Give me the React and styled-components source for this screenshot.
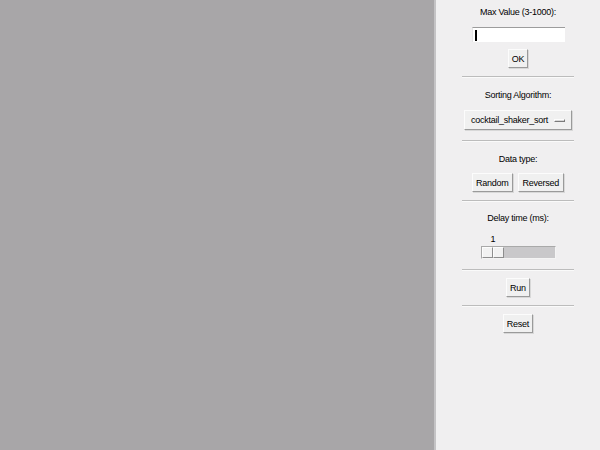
import React from 'react'
import styled, { createGlobalStyle } from 'styled-components'

const GlobalStyle = createGlobalStyle`
  html, body {
    margin: 0;
    padding: 0;
    width: 600px;
    height: 450px;
    overflow: hidden;
    background: #f0eff0;
  }
  * { box-sizing: border-box; }
`

const Window = styled.div`
  display: flex;
  width: 600px;
  height: 450px;
  font-family: "Liberation Sans", Arial, sans-serif;
  font-size: 9px;
  letter-spacing: -0.25px;
  color: #000;
`

const Canvas = styled.div`
  width: 436px;
  height: 100%;
  background: #a8a6a8;
  border-right: 2px solid #c4c3c5;
`

const Panel = styled.div`
  flex: 1;
  display: flex;
  flex-direction: column;
  align-items: center;
  background: #f0eff0;
  padding-top: 5px;
`

const Label = styled.div`
  height: 14px;
  line-height: 14px;
  margin-top: ${p => p.$mt || 0}px;
  white-space: nowrap;
`

const Entry = styled.div`
  width: 93px;
  height: 15px;
  margin-top: ${p => p.$mt || 0}px;
  background: #fff;
  border-top: 1px solid #9c9c9c;
  border-left: 1px solid #e4e4e4;
  display: flex;
  align-items: center;
  padding-left: 2px;
`

const Caret = styled.span`
  width: 2px;
  height: 11px;
  background: #000;
`

const Button = styled.div`
  height: 19px;
  padding: 0 ${p => p.$px || 4}px;
  margin-top: ${p => p.$mt || 0}px;
  display: flex;
  align-items: center;
  justify-content: center;
  background: #f0f0f0;
  border: 1px solid;
  border-color: #fcfcfc #9a9a9a #9a9a9a #fcfcfc;
  box-shadow: 1px 1px 0 #d8d8d8;
`

const ButtonRow = styled.div`
  display: flex;
  gap: 5px;
  margin-top: ${p => p.$mt || 0}px;
`

const Separator = styled.div`
  width: 112px;
  height: 2px;
  margin-top: ${p => p.$mt || 0}px;
  border-top: 1px solid #bcbcbc;
  border-bottom: 1px solid #fafafa;
`

const OptionMenu = styled.div`
  width: 108px;
  height: 20px;
  margin-top: ${p => p.$mt || 0}px;
  display: flex;
  align-items: center;
  justify-content: space-between;
  padding: 0 6px 0 6px;
  background: #f0f0f0;
  border: 1px solid;
  border-color: #fcfcfc #9a9a9a #9a9a9a #fcfcfc;
  box-shadow: 1px 1px 0 #d8d8d8;
`

const Indicator = styled.span`
  width: 11px;
  height: 3px;
  border: 1px solid;
  border-color: #fcfcfc #7a7a7a #7a7a7a #fcfcfc;
  background: #d8d8d8;
`

const ScaleBox = styled.div`
  width: 75px;
  margin-top: ${p => p.$mt || 0}px;
  display: flex;
  flex-direction: column;
`

const ScaleValue = styled.div`
  height: 13px;
  line-height: 13px;
  padding-left: 10px;
`

const Trough = styled.div`
  height: 13px;
  background: #c9c8ca;
  border: 1px solid;
  border-color: #a9a9a9 #f4f4f4 #f4f4f4 #a9a9a9;
  display: flex;
`

const Thumb = styled.div`
  width: 22px;
  height: 100%;
  display: flex;
`

const ThumbHalf = styled.div`
  flex: 1;
  background: #f2f2f2;
  border: 1px solid;
  border-color: #fdfdfd #8e8e8e #8e8e8e #fdfdfd;
`

export default function App() {
  return (
    <>
      <GlobalStyle />
      <Window>
        <Canvas />
        <Panel>
          <Label>Max Value (3-1000):</Label>
          <Entry $mt={8}>
            <Caret />
          </Entry>
          <Button $mt={7} $px={3}>OK</Button>
          <Separator $mt={8} />
          <Label $mt={10}>Sorting Algorithm:</Label>
          <OptionMenu $mt={8}>
            <span>cocktail_shaker_sort</span>
            <Indicator />
          </OptionMenu>
          <Separator $mt={10} />
          <Label $mt={10}>Data type:</Label>
          <ButtonRow $mt={7}>
            <Button $px={3}>Random</Button>
            <Button $px={4}>Reversed</Button>
          </ButtonRow>
          <Separator $mt={8} />
          <Label $mt={9}>Delay time (ms):</Label>
          <ScaleBox $mt={8}>
            <ScaleValue>1</ScaleValue>
            <Trough>
              <Thumb>
                <ThumbHalf />
                <ThumbHalf />
              </Thumb>
            </Trough>
          </ScaleBox>
          <Separator $mt={10} />
          <Button $mt={7} $px={3}>Run</Button>
          <Separator $mt={8} />
          <Button $mt={7} $px={3}>Reset</Button>
        </Panel>
      </Window>
    </>
  )
}
